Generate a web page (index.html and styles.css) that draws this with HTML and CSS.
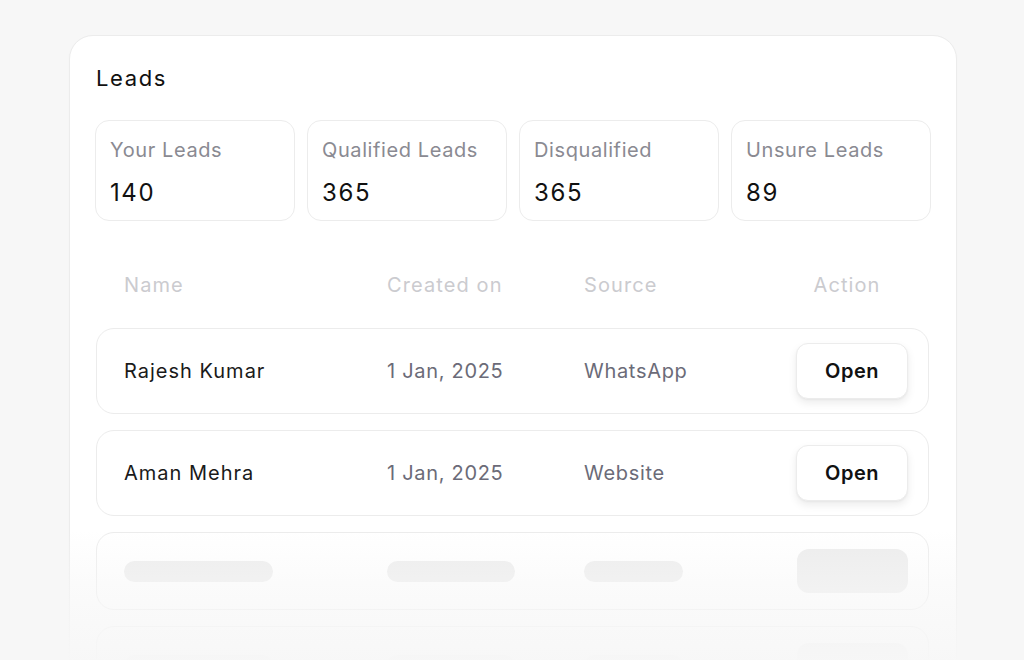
FILE: index.html
```html
<!DOCTYPE html>
<html lang="en">
<head>
<meta charset="utf-8">
<title>Leads</title>
<link rel="stylesheet" href="styles.css">
</head>
<body>
<main class="page">
  <section class="card">
    <h1 class="title">Leads</h1>
    <div class="stats">
      <div class="stat"><div class="stat-label">Your Leads</div><div class="stat-value">140</div></div>
      <div class="stat"><div class="stat-label">Qualified Leads</div><div class="stat-value">365</div></div>
      <div class="stat"><div class="stat-label">Disqualified</div><div class="stat-value">365</div></div>
      <div class="stat"><div class="stat-label">Unsure Leads</div><div class="stat-value">89</div></div>
    </div>
    <div class="thead">
      <div>Name</div><div>Created on</div><div>Source</div><div class="th-action">Action</div>
    </div>
    <div class="rows">
      <div class="row">
        <div class="c-name">Rajesh Kumar</div>
        <div class="c-muted">1 Jan, 2025</div>
        <div class="c-muted">WhatsApp</div>
        <button class="open">Open</button>
      </div>
      <div class="row">
        <div class="c-name">Aman Mehra</div>
        <div class="c-muted">1 Jan, 2025</div>
        <div class="c-muted">Website</div>
        <button class="open">Open</button>
      </div>
      <div class="row skeleton">
        <div><span class="sk sk-name"></span></div>
        <div><span class="sk sk-date"></span></div>
        <div><span class="sk sk-src"></span></div>
        <span class="sk sk-btn"></span>
      </div>
      <div class="row skeleton">
        <div><span class="sk sk-name"></span></div>
        <div><span class="sk sk-date"></span></div>
        <div><span class="sk sk-src"></span></div>
        <span class="sk sk-btn"></span>
      </div>
    </div>
  </section>
  <div class="fade"></div>
</main>
</body>
</html>
```
FILE: styles.css
```css
* { box-sizing: border-box; }
html, body { margin: 0; height: 100%; }
body {
  background: #f7f7f7;
  font-family: Inter, "Noto Sans", sans-serif;
  color: #111;
  overflow: hidden;
}
.page {
  position: relative;
  height: 660px;
  padding: 35px 67px 0 69px;
  overflow: hidden;
}
.card {
  background: #fff;
  border: 1px solid #ececec;
  border-radius: 24px;
  padding: 25px 25px 40px;
  box-shadow: 0 1px 3px rgba(0,0,0,0.02);
}
.title {
  margin: 0 0 0 1px;
  font-size: 22px;
  font-weight: 400;
  line-height: 34px;
  letter-spacing: 1.6px;
  color: #111;
}
.stats {
  margin-top: 25px;
  display: grid;
  grid-template-columns: repeat(4, 1fr);
  gap: 12px;
}
.stat {
  height: 101px;
  border: 1px solid #ececec;
  border-radius: 14px;
  padding: 16px 14px 0;
}
.stat-label {
  font-size: 20px;
  line-height: 26px;
  letter-spacing: 0.6px;
  color: #8a8a92;
}
.stat-value {
  margin-top: 15px;
  font-size: 24px;
  line-height: 30px;
  letter-spacing: 1.6px;
  color: #111;
}
.thead, .row {
  display: grid;
  grid-template-columns: 263px 197px 1fr 112px;
  align-items: center;
}
.thead {
  align-items: end;
  margin: 0 2px 0 1px;
  padding: 0 21px 30px 28px;
  height: 107px;
  font-size: 20px;
  line-height: 26px;
  letter-spacing: 1.1px;
  color: #cbcbcf;
}
.th-action { text-align: center; padding-right: 10px; }
.rows {
  display: flex;
  flex-direction: column;
  gap: 16px;
  margin: 0 2px 0 1px;
}
.row {
  border: 1px solid #ececec;
  border-radius: 18px;
  padding: 14px 20px 14px 27px;
  font-size: 20px;
}
.c-name { color: #1a1a1a; letter-spacing: 1px; }
.c-muted { color: #6b6b78; letter-spacing: 0.7px; }
.open {
  height: 56px;
  width: 112px;
  border: 1px solid #ececec;
  border-radius: 12px;
  background: #fff;
  font-family: inherit;
  font-size: 20px;
  font-weight: 600;
  letter-spacing: 0.5px;
  color: #111;
  box-shadow: 0 4px 8px rgba(0,0,0,0.08), 0 1px 2px rgba(0,0,0,0.04);
  cursor: pointer;
}
.skeleton { height: 78px; padding-top: 0; padding-bottom: 0; }
.sk {
  display: block;
  background: #ececec;
  border-radius: 11px;
  height: 21px;
}
.sk-name { width: 149px; }
.sk-date { width: 128px; }
.sk-src { width: 99px; }
.sk-btn { width: 111px; height: 44px; border-radius: 12px; margin-left: 1px; }
.fade {
  position: absolute;
  left: 0;
  right: 0;
  bottom: 0;
  height: 130px;
  background: linear-gradient(to bottom, rgba(247,247,247,0) 0%, rgba(247,247,247,0.55) 45%, rgba(247,247,247,0.96) 100%);
  pointer-events: none;
}
```
